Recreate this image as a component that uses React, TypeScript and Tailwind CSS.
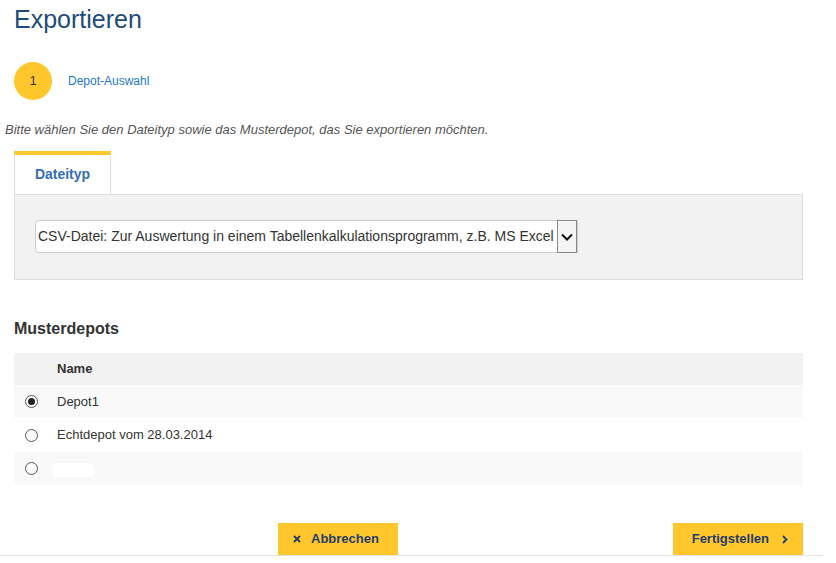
import { useState } from "react";

const depots = [
  { id: "d1", name: "Depot1" },
  { id: "d2", name: "Echtdepot vom 28.03.2014" },
  { id: "d3", name: "" },
];

function Radio({ checked, onClick }: { checked: boolean; onClick: () => void }) {
  return (
    <button
      onClick={onClick}
      className="w-[13px] h-[13px] rounded-full border border-[#555] bg-white flex items-center justify-center"
    >
      {checked && <span className="w-[7px] h-[7px] rounded-full bg-[#222]" />}
    </button>
  );
}

export default function App() {
  const [selected, setSelected] = useState("d1");

  return (
    <div
      className="w-[823px] bg-white text-[#333]"
      style={{ fontFamily: '"Liberation Sans", Arial, sans-serif' }}
    >
      <div className="pl-[14px] pr-[20px]">
        {/* Title */}
        <h1 className="pt-1 text-[25px] leading-[30px] text-[#1d4b7a]">Exportieren</h1>

        {/* Steps */}
        <div className="mt-[28px] flex items-center gap-4">
          <div className="w-[38px] h-[38px] rounded-full bg-[#ffc72c] flex items-center justify-center text-[13px] text-[#333]">
            1
          </div>
          <span className="text-[12px] text-[#1e78c8]">Depot-Auswahl</span>
        </div>

        <p className="-ml-[9px] mt-[22px] text-[13px] leading-4 italic text-[#555]">
          Bitte wählen Sie den Dateityp sowie das Musterdepot, das Sie exportieren möchten.
        </p>

        {/* Tab */}
        <div className="mt-[13px] flex">
          <div className="w-[97px] border-t-4 border-t-[#ffc72c] border-x border-x-[#ddd] bg-white h-[43px] flex items-center justify-center text-[14px] font-bold text-[#346eb4]">
            Dateityp
          </div>
        </div>
        <div className="border border-[#ddd] bg-[#f2f2f2] pl-[20px] pt-[25px] pb-[26px]">
          <div className="w-[543px] h-[33px] flex bg-white border border-[#ccc] rounded-l-[4px]">
            <div className="flex-1 pl-[2px] flex items-center text-[14px] text-[#333] whitespace-nowrap">
              CSV-Datei: Zur Auswertung in einem Tabellenkalkulationsprogramm, z.B. MS Excel
            </div>
            <div className="w-[20px] -my-px border border-[#8a8a8a] bg-[#f4f4f4] flex items-center justify-center">
              <svg width="12" height="8" viewBox="0 0 12 8" fill="none">
                <path d="M1 1.5 6 6.5 11 1.5" stroke="#111" strokeWidth="2" />
              </svg>
            </div>
          </div>
        </div>

        {/* Musterdepots */}
        <h2 className="mt-[39px] text-[16px] leading-5 font-bold text-[#333]">Musterdepots</h2>
        <div className="mt-[14px] text-[13px]">
          <div className="h-[32px] bg-[#f2f2f2] flex items-center pl-[43px] font-bold text-[#333]">
            Name
          </div>
          {depots.map((d, i) => (
            <div
              key={d.id}
              className={`flex items-center pl-[11px] ${
                i % 2 === 0 ? "bg-[#f9f9f9] h-[33px]" : "bg-white h-[34px]"
              }`}
            >
              <Radio checked={selected === d.id} onClick={() => setSelected(d.id)} />
              {d.name ? (
                <span className="ml-[19px] text-[#333]">{d.name}</span>
              ) : (
                <span className="ml-[15px] mt-[2px] w-[42px] h-[14px] bg-white rounded-r-[6px]" />
              )}
            </div>
          ))}
        </div>

        {/* Buttons */}
        <div className="mt-[38px] flex">
          <button className="ml-[264px] w-[120px] h-[32px] bg-[#ffc72c] flex items-center pl-[15px] gap-[10px] text-[13px] font-bold text-[#1f3d6b]">
            <svg width="8" height="8" viewBox="0 0 8 8">
              <path d="M1 1 7 7M7 1 1 7" stroke="#1f3d6b" strokeWidth="1.8" />
            </svg>
            Abbrechen
          </button>
          <button className="ml-auto w-[130px] h-[32px] bg-[#ffc72c] flex items-center justify-end pr-[15px] gap-[13px] text-[13px] font-bold text-[#1f3d6b]">
            Fertigstellen
            <svg width="6" height="9" viewBox="0 0 6 9">
              <path d="M1 1 4.5 4.5 1 8" stroke="#1f3d6b" strokeWidth="1.8" fill="none" />
            </svg>
          </button>
        </div>
      </div>
      <div className="h-px bg-[#e5e5e5]" />
    </div>
  );
}
